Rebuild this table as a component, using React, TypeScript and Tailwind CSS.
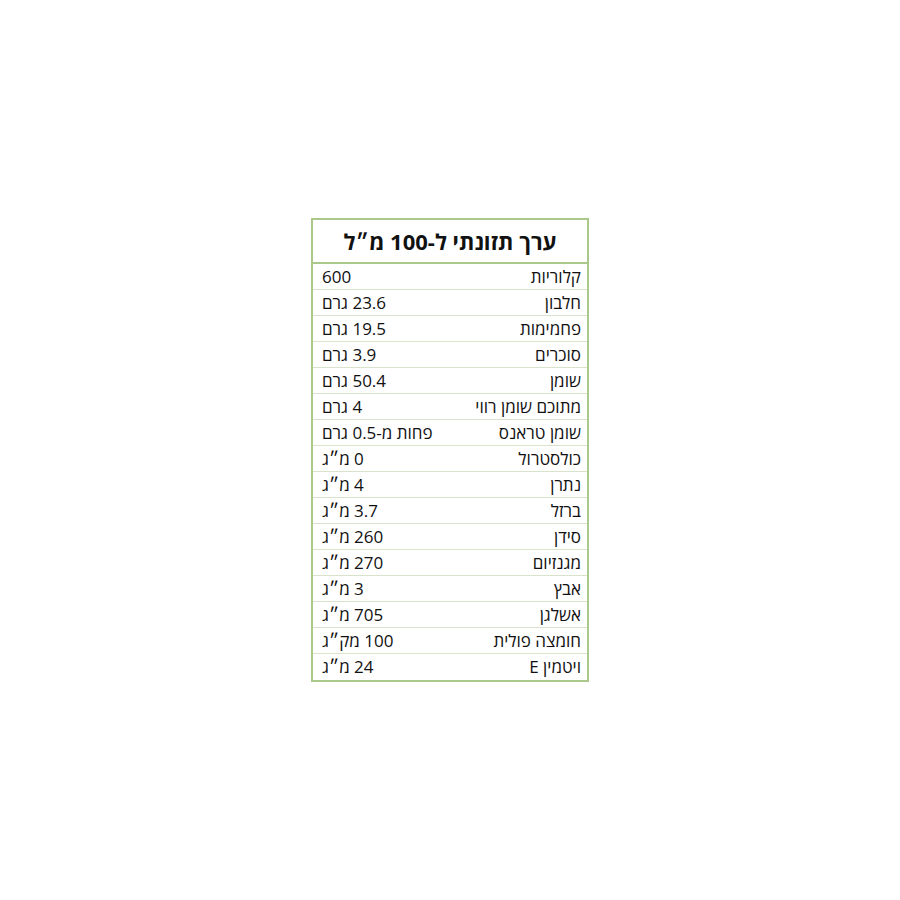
const rows: [string, string][] = [
  ["קלוריות", "600"],
  ["חלבון", "23.6 גרם"],
  ["פחמימות", "19.5 גרם"],
  ["סוכרים", "3.9 גרם"],
  ["שומן", "50.4 גרם"],
  ["מתוכם שומן רווי", "4 גרם"],
  ["שומן טראנס", "פחות מ-0.5 גרם"],
  ["כולסטרול", "0 מ״ג"],
  ["נתרן", "4 מ״ג"],
  ["ברזל", "3.7 מ״ג"],
  ["סידן", "260 מ״ג"],
  ["מגנזיום", "270 מ״ג"],
  ["אבץ", "3 מ״ג"],
  ["אשלגן", "705 מ״ג"],
  ["חומצה פולית", "100 מק״ג"],
  ["ויטמין E", "24 מ״ג"],
];

export default function App() {
  return (
    <div className="w-[900px] h-[900px] bg-white pt-[218px]" style={{ fontFamily: '"Open Sans", "Liberation Sans", "DejaVu Sans", sans-serif' }}>
      <div dir="rtl" className="mx-auto w-[278px] border-2 border-[#aac88a] text-[#111]">
        <div className="h-[44px] flex items-center justify-center border-b-2 border-[#aac88a] text-[22px] font-bold">
          ערך תזונתי ל-100 מ״ל
        </div>
        {rows.map(([label, value], i) => (
          <div
            key={label}
            className={`h-[26px] flex items-center justify-between pr-[6px] pl-[9px] text-[17px] ${i < rows.length - 1 ? "border-b border-[#d9e3cc]" : ""}`}
          >
            <span>{label}</span>
            <span>{value}</span>
          </div>
        ))}
      </div>
    </div>
  );
}
